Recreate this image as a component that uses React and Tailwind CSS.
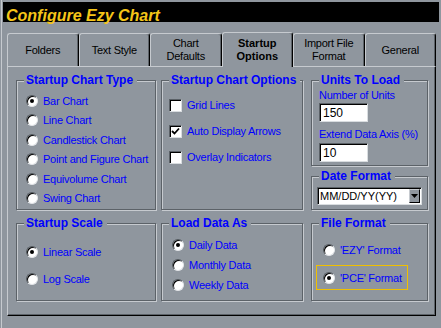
import React from 'react'

const FONT = { fontFamily: '"Liberation Sans", Arial, sans-serif' }

const chartTypes = [
  { label: 'Bar Chart', checked: true },
  { label: 'Line Chart' },
  { label: 'Candlestick Chart' },
  { label: 'Point and Figure Chart' },
  { label: 'Equivolume Chart' },
  { label: 'Swing Chart' },
]

const tabs = [
  { label: ['Folders'] },
  { label: ['Text Style'] },
  { label: ['Chart', 'Defaults'] },
  { label: ['Startup', 'Options'], active: true },
  { label: ['Import File', 'Format'] },
  { label: ['General'] },
]

function Radio({ checked }) {
  return (
    <span className="w-[12px] h-[12px] shrink-0 rounded-full bg-white border border-[#4f555b] border-r-[#e2e5e8] border-b-[#e2e5e8] shadow-[inset_1px_1px_0_#000] flex items-center justify-center">
      {checked && <span className="w-[4px] h-[4px] rounded-full bg-black" />}
    </span>
  )
}

function Check({ checked }) {
  return (
    <span className="w-[13px] h-[13px] shrink-0 bg-white border border-[#5a6066] border-r-[#d9dde0] border-b-[#d9dde0] shadow-[inset_1px_1px_0_#000] flex items-center justify-center">
      {checked && (
        <svg width="9" height="9" viewBox="0 0 9 9">
          <polyline points="1,4 3.5,6.5 8,1.5" fill="none" stroke="#000" strokeWidth="1.8" />
        </svg>
      )}
    </span>
  )
}

function Option({ children, className }) {
  return (
    <div className={`flex items-center gap-[5px] text-[11px] tracking-[-0.25px] leading-[14px] text-[#0000ff] ${className}`}>
      {children}
    </div>
  )
}

// etched group box, caption sits on the top edge
function Group({ title, className, inner, children }) {
  return (
    <div className={`relative pt-[7px] ${className}`}>
      <div className={`h-full border border-[#5c6268] shadow-[inset_1px_1px_0_#c6cacf,1px_1px_0_#c6cacf] ${inner}`}>
        {children}
      </div>
      <span className="absolute top-0 left-[8px] pl-[2px] pr-[4px] bg-[#8f969e] text-[12px] leading-[14px] font-bold text-[#0000ff]">
        {title}
      </span>
    </div>
  )
}

function TextBox({ value }) {
  return (
    <div className="w-[49px] h-[19px] bg-white border border-[#5a6066] border-r-[#d9dde0] border-b-[#d9dde0] shadow-[inset_1px_1px_0_#000] pl-[3px] flex items-center text-[12px] text-black">
      {value}
    </div>
  )
}

export default function App() {
  return (
    <div
      style={FONT}
      className="w-[441px] h-[328px] bg-[#8f969e] pt-[2px] pl-[3px] pr-[2px] shadow-[inset_1px_0_0_#8f969e,inset_2px_0_0_#c6cacf] overflow-hidden"
    >
      {/* title bar */}
      <div className="h-[20px] bg-black pl-[3px] pt-[2px]">
        <span className="text-[16px] leading-[18px] font-bold italic text-[#f5c518]">Configure Ezy Chart</span>
      </div>

      {/* tabs */}
      <div className="flex items-end w-[429px] ml-[4px] mt-[10px] h-[34px]">
        {tabs.map((t, i) => (
          <div
            key={i}
            className={`flex-1 flex flex-col items-center justify-center rounded-t-[3px] border-t border-l border-[#c6cacf] border-r border-r-black shadow-[inset_-1px_0_0_#5c6268] bg-[#8f969e] text-black text-[11px] leading-[13px] ${t.active ? 'h-[35px] -mb-[1px] relative z-10 font-bold' : 'h-[33px] tracking-[-0.25px]'}`}
          >
            {t.label.map((l) => (
              <span key={l}>{l}</span>
            ))}
          </div>
        ))}
      </div>

      {/* page */}
      <div className="w-[429px] ml-[4px] h-[250px] border-t border-l border-[#c6cacf] border-r border-b border-r-black border-b-black shadow-[inset_-1px_-1px_0_#5c6268] pl-[8px] pt-[6px] flex">
        <div className="w-[140px] mr-[5px] flex flex-col gap-[6px]">
          <Group title="Startup Chart Type" className="h-[137px]" inner="pt-[10px] pl-[9px]">
            {chartTypes.map((c) => (
              <Option key={c.label} className="h-[19.5px]">
                <Radio checked={c.checked} />
                {c.label}
              </Option>
            ))}
          </Group>
          <Group title="Startup Scale" className="h-[85px]" inner="pt-[14px] pl-[9px]">
            <Option className="h-[27px]">
              <Radio checked />
              Linear Scale
            </Option>
            <Option className="h-[27px]">
              <Radio />
              Log Scale
            </Option>
          </Group>
        </div>

        <div className="w-[142px] mr-[8px] flex flex-col gap-[6px]">
          <Group title="Startup Chart Options" className="h-[137px]" inner="pt-[11px] pl-[7px]">
            <Option className="h-[26px]">
              <Check />
              Grid Lines
            </Option>
            <Option className="h-[26px]">
              <Check checked />
              Auto Display Arrows
            </Option>
            <Option className="h-[26px]">
              <Check />
              Overlay Indicators
            </Option>
          </Group>
          <Group title="Load Data As" className="h-[85px]" inner="pt-[11px] pl-[10px]">
            <Option className="h-[20px]">
              <Radio checked />
              Daily Data
            </Option>
            <Option className="h-[20px]">
              <Radio />
              Monthly Data
            </Option>
            <Option className="h-[20px]">
              <Radio />
              Weekly Data
            </Option>
          </Group>
        </div>

        <div className="w-[117px] flex flex-col">
          <Group title="Units To Load" className="h-[93px]" inner="pt-[7px] pl-[7px]">
            <div className="text-[11px] tracking-[-0.25px] leading-[14px] text-[#0000ff]">Number of Units</div>
            <div className="mt-[1px]">
              <TextBox value="150" />
            </div>
            <div className="mt-[5px] text-[11px] tracking-[-0.25px] leading-[14px] text-[#0000ff] whitespace-nowrap">Extend Data Axis (%)</div>
            <div className="mt-[2px]">
              <TextBox value="10" />
            </div>
          </Group>
          <Group title="Date Format" className="h-[41px] mt-[3px]" inner="pt-[10px] pl-[5px]">
            <div className="w-[105px] h-[18px] bg-white border border-[#5a6066] border-r-[#d9dde0] border-b-[#d9dde0] shadow-[inset_1px_1px_0_#000] flex items-center justify-between pl-[2px] pr-[1px] text-[11px] text-black">
              <span>MM/DD/YY(YY)</span>
              <span className="w-[11px] h-[14px] bg-[#8f969e] border border-[#c6cacf] border-r-black border-b-black flex items-center justify-center">
                <svg width="7" height="4" viewBox="0 0 7 4">
                  <polygon points="0,0 7,0 3.5,4" fill="#000" />
                </svg>
              </span>
            </div>
          </Group>
          <Group title="File Format" className="h-[85px] mt-[6px]" inner="pt-[14px]">
            <Option className="h-[24px] pl-[11px]">
              <Radio />
              'EZY' Format
            </Option>
            <Option className="mt-[3px] ml-[4px] w-[92px] h-[25px] pl-[6px] border border-[#f0c000]">
              <Radio checked />
              'PCE' Format
            </Option>
          </Group>
        </div>
      </div>
    </div>
  )
}
